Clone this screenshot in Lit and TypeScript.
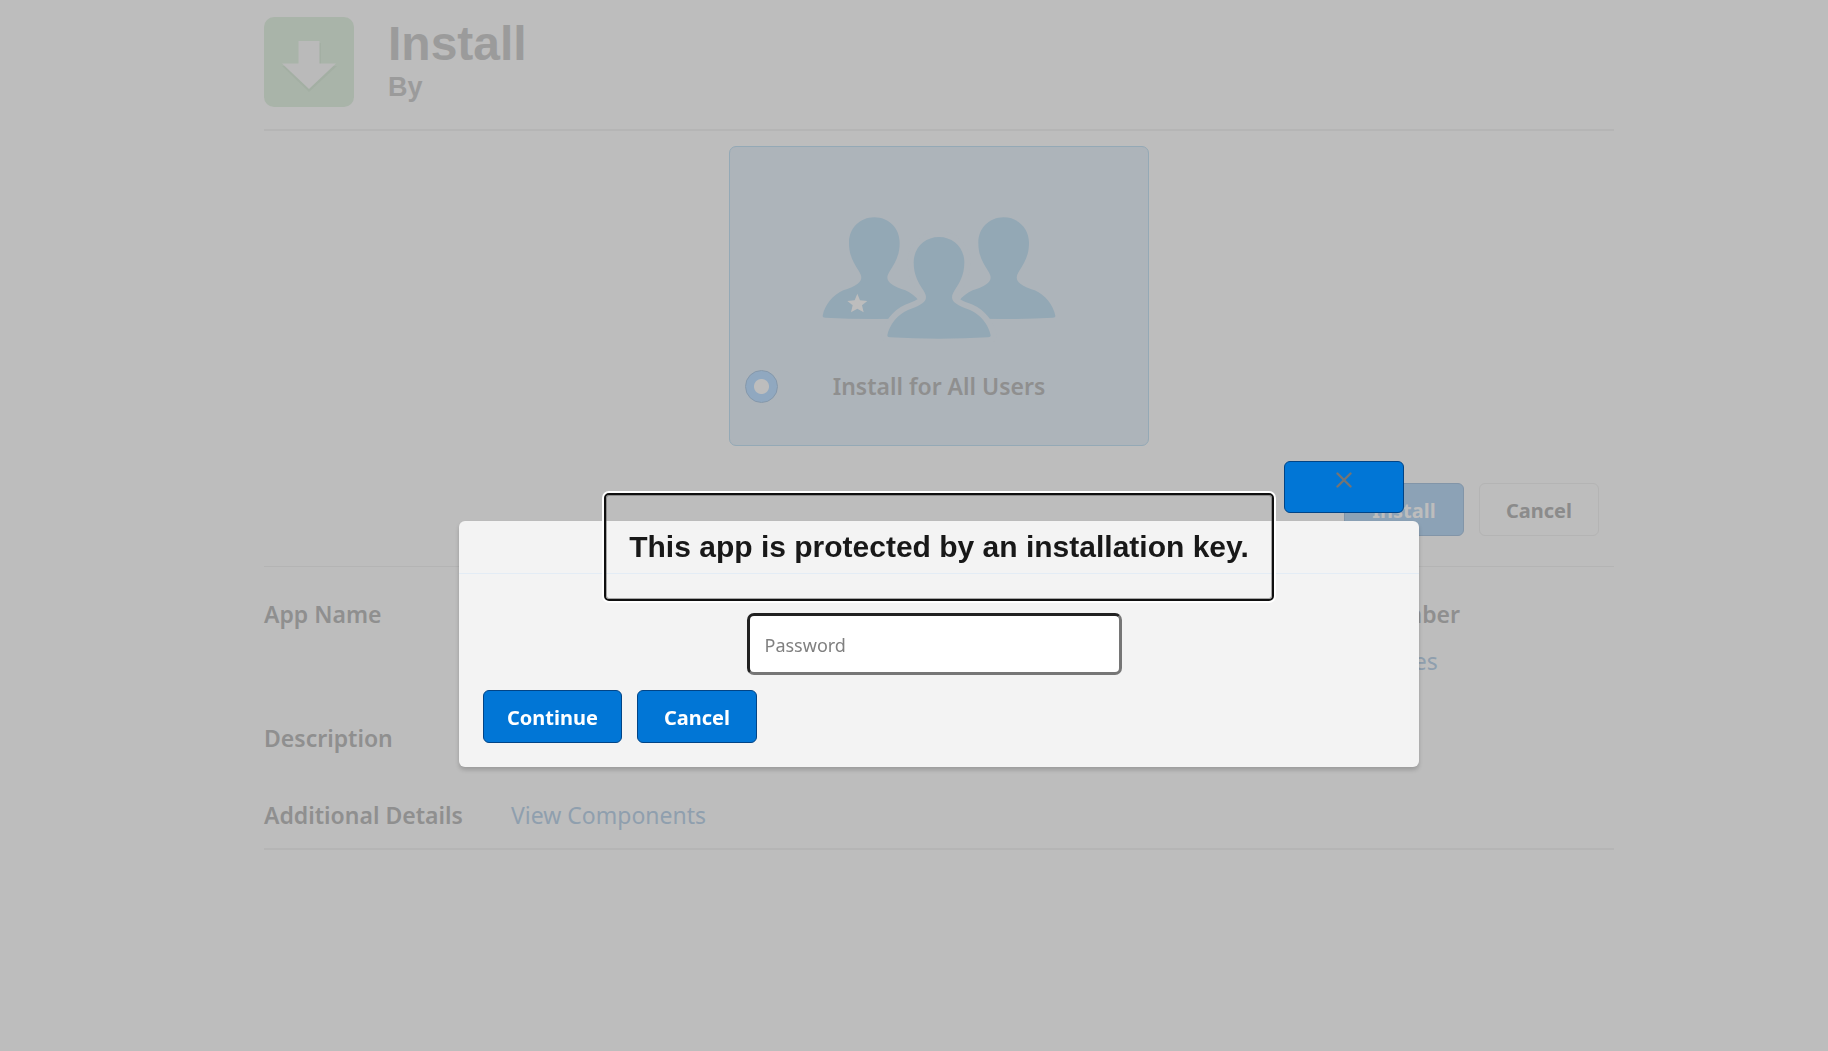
import { LitElement, html, css, svg } from "lit";
import { customElement, state } from "lit/decorators.js";

const PERSON =
  "M657 306 C614 306 581 339 581 382 C581 422 596 444 610 466 C621 483 621 494 607 505 " +
  "C596 514 580 519 564 525 C532 539 508 570 502 601 C502 605 504 606 510 607 " +
  "Q580 611 657 611 Q734 611 804 607 C810 606 812 605 812 601 C806 570 782 539 750 525 " +
  "C734 519 718 514 707 505 C693 494 693 483 704 466 C718 444 733 422 733 382 " +
  "C733 339 700 306 657 306 Z";

const people = svg`
  <path class="person" d=${PERSON} transform="translate(-194 -59)" />
  <path class="person" d=${PERSON} transform="translate(194 -59)" />
  <path class="halo" d=${PERSON} />
  <path class="person" d=${PERSON} />
  <path class="star" d="M412 476 L420 496 L442 498 L426 511 L431 532 L412 521 L393 532 L398 511 L382 498 L404 496 Z" />
`;

@customElement("app-root")
export class AppRoot extends LitElement {
  @state() private open = true;

  static styles = css`
    :host {
      display: block;
      min-height: 100vh;
      box-sizing: border-box;
      padding-left: 50px;
      background: #bdbdbd;
      color: #8f8f8f;
      font-family: "Segoe UI", "Noto Sans", "Open Sans", sans-serif;
      font-size: 23px;
      line-height: 36px;
    }
    * {
      box-sizing: border-box;
    }
    .page {
      width: 76%;
      min-width: 960px;
      max-width: 1350px;
      margin: 0 auto;
    }
    .head {
      display: flex;
      align-items: flex-start;
      gap: 34px;
      padding: 17px 0 22px;
      border-bottom: 2px solid #b5b5b5;
    }
    .logo {
      display: block;
      width: 90px;
      height: 90px;
    }
    .titles {
      font-family: "Liberation Sans", Arial, sans-serif;
      font-weight: 700;
      color: #9b9b9b;
    }
    .title {
      margin: 0;
      font-size: 48px;
      line-height: 54px;
    }
    .by {
      margin: 0;
      font-size: 27px;
      line-height: 32px;
    }
    .choice {
      display: flex;
      flex-direction: column;
      align-items: center;
      width: 420px;
      height: 300px;
      margin: 15px auto 0;
      padding: 68px 15px 0;
      border: 1px solid #94a9b6;
      border-radius: 7px;
      background: #adb4ba;
    }
    .people {
      display: block;
      width: 240px;
      height: 127px;
    }
    .person {
      fill: #93a8b5;
    }
    .halo {
      fill: #adb4ba;
      stroke: #adb4ba;
      stroke-width: 36;
    }
    .star {
      fill: #bdbdbd;
    }
    .pick {
      display: grid;
      grid-template-columns: 1fr auto 1fr;
      align-items: center;
      width: 100%;
      margin-top: 26px;
      font-weight: 600;
    }
    .radio {
      appearance: none;
      width: 33px;
      height: 33px;
      margin: 0;
      border: 1px solid #8598ab;
      border-radius: 50%;
      background: radial-gradient(circle, #bdbdbd 7px, #90a8c0 8px);
    }
    .actions {
      display: flex;
      justify-content: flex-end;
      gap: 15px;
      padding: 37px 15px 30px;
      border-bottom: 1px solid #b4b4b4;
    }
    .btn {
      min-width: 120px;
      height: 53px;
      padding: 2px 23px 0;
      border: 1px solid #014486;
      border-radius: 6px;
      background: #0176d6;
      color: #ffffff;
      font: 700 20px/30px "Segoe UI", "Noto Sans", "Open Sans", sans-serif;
    }
    .btn.muted {
      border-color: #8295a8;
      background: #8ca2b6;
      color: #bdbdbd;
    }
    .btn.plain {
      border-color: #b4b4b4;
      background: #bdbdbd;
      color: #8b8b8b;
    }
    .details {
      display: grid;
      grid-template-columns: 247px 1fr 337px;
      row-gap: 41px;
      padding: 29px 0 15px;
      border-bottom: 2px solid #b5b5b5;
    }
    .label {
      margin: 0;
      font-size: 23px;
      font-weight: 600;
    }
    .version {
      display: grid;
      grid-column: 3;
      row-gap: 11px;
    }
    .version .link {
      padding-left: 8px;
    }
    .row-start {
      grid-column: 1;
    }
    .link {
      color: #8f9fae;
      text-decoration: none;
    }
    .overlay {
      position: fixed;
      inset: 0;
      display: flex;
      justify-content: center;
      align-items: center;
      padding: 237px 0 0 50px;
    }
    .dialog {
      position: relative;
      width: 54%;
      min-width: 960px;
      max-width: 960px;
      border-radius: 6px;
      background: #f3f3f3;
      box-shadow: 0 3px 4px rgba(0, 0, 0, 0.18);
    }
    .close {
      position: absolute;
      top: -60px;
      right: 15px;
      display: flex;
      justify-content: center;
      height: 52px;
      padding-top: 10px;
    }
    .cross {
      width: 16px;
      height: 16px;
      fill: none;
      stroke: #747474;
      stroke-width: 2.4;
      stroke-linecap: round;
    }
    .bar {
      display: flex;
      justify-content: center;
      align-items: center;
      height: 53px;
      border-bottom: 1px solid #e3ecf5;
    }
    .question {
      flex: none;
      margin: 0;
      padding: 33px 22px;
      border: 1px solid rgba(90, 90, 90, 0.5);
      border-radius: 3px;
      outline: 2px solid #101010;
      box-shadow: 0 0 0 4px #ffffff;
      color: #181818;
      font: 700 30px/36px "Liberation Sans", Arial, sans-serif;
    }
    .question:focus {
      outline: 2px solid #101010;
    }
    .body {
      padding: 39px 24px 24px;
    }
    .field {
      display: flex;
      justify-content: center;
      padding-right: 10px;
    }
    .password {
      width: 375px;
      height: 62px;
      padding: 2px 15px 0;
      border: 3px solid #767676;
      border-top-color: #212121;
      border-left-color: #212121;
      border-radius: 7px;
      background: #ffffff;
      font: 400 18px/30px "Segoe UI", "Noto Sans", "Open Sans", sans-serif;
    }
    .password::placeholder {
      color: #808080;
    }
    .buttons {
      display: flex;
      gap: 15px;
      margin-top: 15px;
    }
  `;

  private dismiss() {
    this.open = false;
  }

  private renderDialog() {
    return html`
      <div class="overlay">
        <section class="dialog" role="dialog" aria-modal="true" aria-labelledby="question">
          <button class="btn close" aria-label="Close" @click=${this.dismiss}>
            <svg class="cross" viewBox="0 0 16 16"><path d="M1.5 1.5 L14.5 14.5 M14.5 1.5 L1.5 14.5" /></svg>
          </button>
          <header class="bar">
            <h2 class="question" id="question" tabindex="-1">This app is protected by an installation key.</h2>
          </header>
          <div class="body">
            <div class="field">
              <input class="password" type="password" placeholder="Password" aria-labelledby="question" />
            </div>
            <div class="buttons">
              <button class="btn">Continue</button>
              <button class="btn" @click=${this.dismiss}>Cancel</button>
            </div>
          </div>
        </section>
      </div>
    `;
  }

  render() {
    return html`
      <main class="page">
        <header class="head">
          <svg class="logo" viewBox="0 0 90 90" aria-hidden="true">
            <rect width="90" height="90" rx="10" fill="#a9b4a9" />
            <path d="M35 26 H57 V49 H73 L45 75 L18 49 H35 Z" fill="#a1aca1" opacity="0.7" />
            <path d="M34.5 24 H55.5 V46.5 H72 L45 72 L18 46.5 H34.5 Z" fill="#bababa" />
          </svg>
          <div class="titles">
            <h1 class="title">Install</h1>
            <p class="by">By</p>
          </div>
        </header>

        <label class="choice">
          <svg class="people" viewBox="297 240 720 381" aria-hidden="true">${people}</svg>
          <span class="pick">
            <input class="radio" type="radio" name="audience" checked />
            <span>Install for All Users</span>
          </span>
        </label>

        <div class="actions">
          <button class="btn muted">Install</button>
          <button class="btn plain">Cancel</button>
        </div>

        <section class="details">
          <h3 class="label">App Name</h3>
          <div class="version">
            <h3 class="label">Version Number</h3>
            <a class="link" href="#notes">Release Notes</a>
          </div>
          <h3 class="label row-start">Description</h3>
          <h3 class="label row-start">Additional Details</h3>
          <a class="link" href="#components">View Components</a>
        </section>
      </main>
      ${this.open ? this.renderDialog() : ""}
    `;
  }
}
